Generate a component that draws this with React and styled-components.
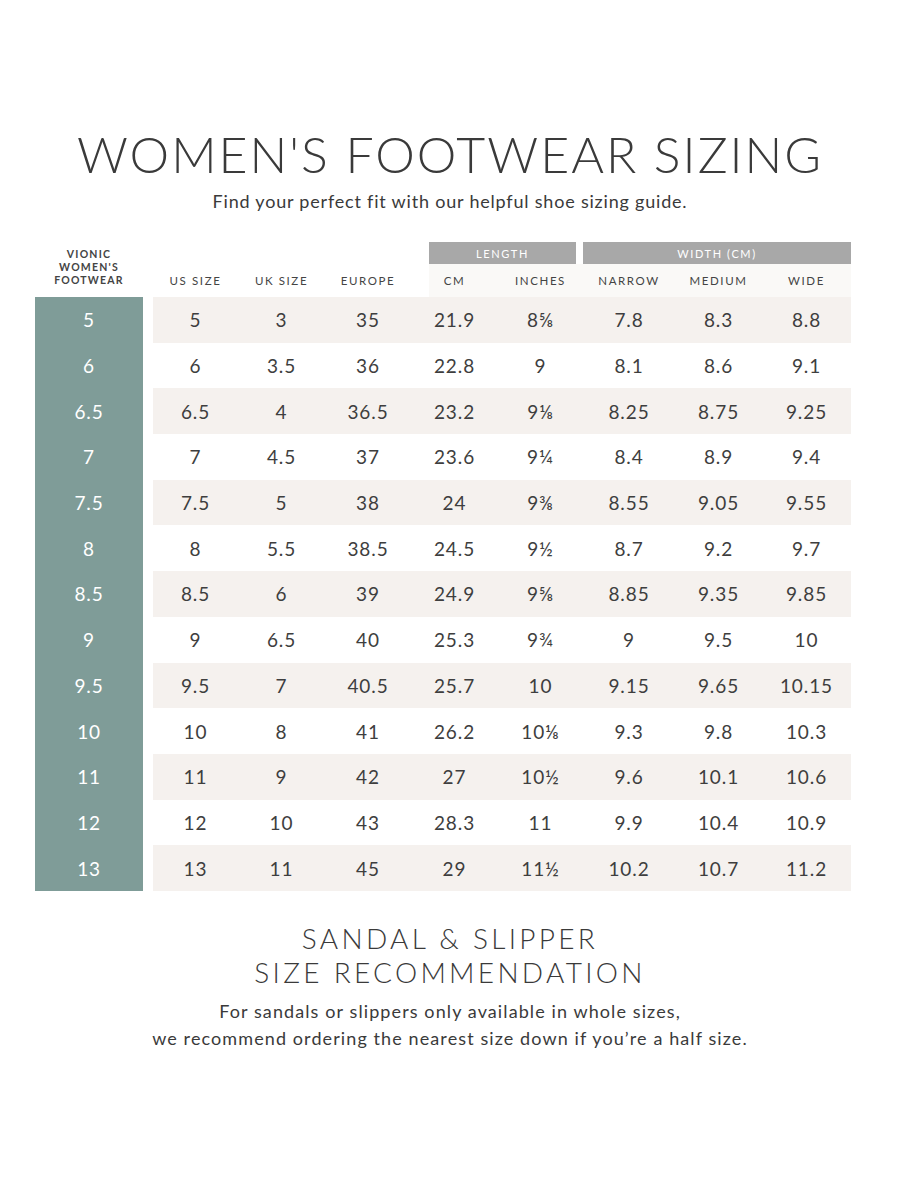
import React from "react";
import styled, { createGlobalStyle } from "styled-components";

const rows = [
  ["5", "5", "3", "35", "21.9", "8⅝", "7.8", "8.3", "8.8"],
  ["6", "6", "3.5", "36", "22.8", "9", "8.1", "8.6", "9.1"],
  ["6.5", "6.5", "4", "36.5", "23.2", "9⅛", "8.25", "8.75", "9.25"],
  ["7", "7", "4.5", "37", "23.6", "9¼", "8.4", "8.9", "9.4"],
  ["7.5", "7.5", "5", "38", "24", "9⅜", "8.55", "9.05", "9.55"],
  ["8", "8", "5.5", "38.5", "24.5", "9½", "8.7", "9.2", "9.7"],
  ["8.5", "8.5", "6", "39", "24.9", "9⅝", "8.85", "9.35", "9.85"],
  ["9", "9", "6.5", "40", "25.3", "9¾", "9", "9.5", "10"],
  ["9.5", "9.5", "7", "40.5", "25.7", "10", "9.15", "9.65", "10.15"],
  ["10", "10", "8", "41", "26.2", "10⅛", "9.3", "9.8", "10.3"],
  ["11", "11", "9", "42", "27", "10½", "9.6", "10.1", "10.6"],
  ["12", "12", "10", "43", "28.3", "11", "9.9", "10.4", "10.9"],
  ["13", "13", "11", "45", "29", "11½", "10.2", "10.7", "11.2"],
];

const columns = ["US SIZE", "UK SIZE", "EUROPE", "CM", "INCHES", "NARROW", "MEDIUM", "WIDE"];

const GlobalStyle = createGlobalStyle`
  body {
    margin: 0;
    background: #ffffff;
    font-family: "Lato", "Open Sans", sans-serif;
    color: #373737;
  }
`;

const Page = styled.main`
  width: 900px;
  min-height: 1200px;
  display: flex;
  flex-direction: column;
  align-items: center;
  padding-top: 128px;
  box-sizing: border-box;
`;

const Title = styled.h1`
  margin: 0;
  font-weight: 300;
  font-size: 50px;
  line-height: 52px;
  letter-spacing: 2px;
  color: #3a3a3a;
`;

const Subtitle = styled.p`
  margin: 10px 0 0;
  font-size: 18px;
  letter-spacing: 0.8px;
  color: #3a3a3a;
`;

const Grid = styled.div`
  margin-top: 30px;
  align-self: flex-start;
  margin-left: 35px;
  display: grid;
  grid-template-columns: 108px 10px 85px 87px 86px 87px 85px 92px 87px 89px;
  grid-template-rows: 22px 33px repeat(13, 45.7px);
`;

const BrandHead = styled.div`
  grid-column: 1;
  grid-row: 1 / 3;
  display: flex;
  align-items: flex-end;
  justify-content: center;
  text-align: center;
  padding-bottom: 10px;
  font-size: 10.5px;
  font-weight: 700;
  line-height: 13px;
  letter-spacing: 1.2px;
  color: #444;
`;

const GroupHead = styled.div`
  grid-row: 1;
  grid-column: ${(p) => p.$cols};
  margin-left: ${(p) => p.$inset || 0}px;
  margin-right: ${(p) => p.$trim || 0}px;
  background: #a8a8a8;
  color: #ffffff;
  font-size: 11px;
  letter-spacing: 1.6px;
  display: flex;
  align-items: center;
  justify-content: center;
`;

const SubHeadBg = styled.div`
  grid-row: 2;
  grid-column: 6 / 11;
  margin-left: 18px;
  background: #faf9f7;
`;

const ColHead = styled.div`
  grid-row: 2;
  grid-column: ${(p) => p.$col};
  display: flex;
  align-items: center;
  justify-content: center;
  font-size: 11.5px;
  letter-spacing: 1.6px;
  color: #444;
  z-index: 1;
`;

const RowBg = styled.div`
  grid-row: ${(p) => p.$row};
  grid-column: 3 / 11;
  background: ${(p) => (p.$shaded ? "#f5f1ee" : "#ffffff")};
`;

const SizeCell = styled.div`
  grid-row: ${(p) => p.$row};
  grid-column: 1;
  background: #7f9c98;
  color: #ffffff;
  display: flex;
  align-items: center;
  justify-content: center;
  font-size: 19px;
  letter-spacing: 0.8px;
`;

const Cell = styled.div`
  grid-row: ${(p) => p.$row};
  grid-column: ${(p) => p.$col};
  display: flex;
  align-items: center;
  justify-content: center;
  font-size: 19px;
  letter-spacing: 0.9px;
  color: #3e3e3e;
  z-index: 1;
`;

const SectionTitle = styled.h2`
  margin: 30px 0 0;
  text-align: center;
  font-weight: 300;
  font-size: 28px;
  line-height: 34px;
  letter-spacing: 3.3px;
  color: #3a3a3a;
`;

const Note = styled.p`
  margin: 9px 0 0;
  text-align: center;
  font-size: 18px;
  line-height: 27px;
  letter-spacing: 1.1px;
  color: #3a3a3a;
`;

export default function App() {
  return (
    <>
      <GlobalStyle />
      <Page>
        <Title>WOMEN'S FOOTWEAR SIZING</Title>
        <Subtitle>Find your perfect fit with our helpful shoe sizing guide.</Subtitle>

        <Grid>
          <BrandHead>
            VIONIC
            <br />
            WOMEN'S
            <br />
            FOOTWEAR
          </BrandHead>
          <GroupHead $cols="6 / 8" $inset={18} $trim={7}>
            LENGTH
          </GroupHead>
          <GroupHead $cols="8 / 11">WIDTH (CM)</GroupHead>
          <SubHeadBg />
          {columns.map((c, i) => (
            <ColHead key={c} $col={i + 3}>
              {c}
            </ColHead>
          ))}

          {rows.map((r, ri) => {
            const row = ri + 3;
            return (
              <React.Fragment key={r[0]}>
                <SizeCell $row={row}>{r[0]}</SizeCell>
                <RowBg $row={row} $shaded={ri % 2 === 0} />
                {r.slice(1).map((v, ci) => (
                  <Cell key={ci} $row={row} $col={ci + 3}>
                    {v}
                  </Cell>
                ))}
              </React.Fragment>
            );
          })}
        </Grid>

        <SectionTitle>
          SANDAL &amp; SLIPPER
          <br />
          SIZE RECOMMENDATION
        </SectionTitle>
        <Note>
          For sandals or slippers only available in whole sizes,
          <br />
          we recommend ordering the nearest size down if you’re a half size.
        </Note>
      </Page>
    </>
  );
}
